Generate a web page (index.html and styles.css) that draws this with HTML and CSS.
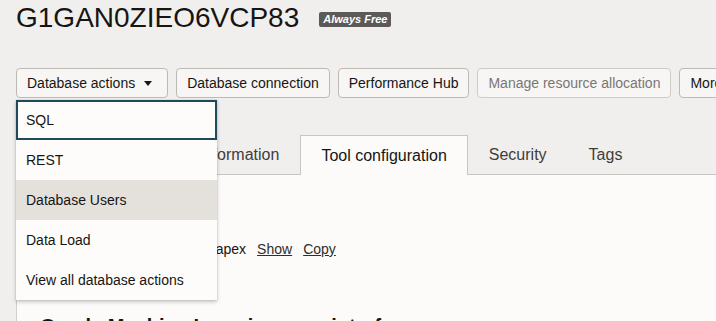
FILE: index.html
```html
<!DOCTYPE html>
<html lang="en">
<head>
<meta charset="utf-8">
<title>G1GAN0ZIEO6VCP83</title>
<link rel="stylesheet" href="styles.css">
</head>
<body>
<div class="page">
  <header class="title-row">
    <h1 class="title">G1GAN0ZIEO6VCP83</h1>
    <span class="badge">Always Free</span>
  </header>

  <div class="actions">
    <div class="menu-wrap">
      <button class="btn btn-menu">Database actions<span class="caret"></span></button>
      <ul class="menu">
        <li class="menu-item is-focused">SQL</li>
        <li class="menu-item">REST</li>
        <li class="menu-item is-hover">Database Users</li>
        <li class="menu-item">Data Load</li>
        <li class="menu-item">View all database actions</li>
      </ul>
    </div>
    <button class="btn">Database connection</button>
    <button class="btn">Performance Hub</button>
    <button class="btn is-disabled">Manage resource allocation</button>
    <button class="btn">More actions</button>
  </div>

  <nav class="tabs">
    <span class="tab tab-first">Autonomous Database information</span>
    <span class="tab is-active">Tool configuration</span>
    <span class="tab">Security</span>
    <span class="tab">Tags</span>
  </nav>

  <section class="panel">
    <h3 class="section-title">Oracle APEX</h3>
    <div class="url-row">
      <span class="url">https://adb.oracle.com/ords/apex</span>
      <a class="link">Show</a>
      <a class="link">Copy</a>
    </div>
    <h3 class="section-title big">Oracle Machine Learning user interface</h3>
  </section>
</div>
</body>
</html>
```

FILE: styles.css
```css
* { box-sizing: border-box; }

html, body {
  margin: 0;
  height: 100%;
  overflow: hidden;
}

body {
  background: #f1efed;
  font-family: "Liberation Sans", Arial, sans-serif;
  color: #161513;
}

.page {
  padding-left: 16px;
  min-height: 100%;
}

.title-row {
  display: flex;
  align-items: center;
  padding-top: 2px;
  height: 34px;
}

.title {
  margin: 0;
  font-size: 28px;
  font-weight: normal;
  line-height: 32px;
  color: #161513;
}

.badge {
  margin-left: 20px;
  margin-top: 3px;
  background: #5b5a59;
  color: #ffffff;
  font-size: 11px;
  font-style: italic;
  font-weight: bold;
  line-height: 15px;
  padding: 0 4px;
  border-radius: 2px;
}

.actions {
  margin-top: 34px;
  display: flex;
  gap: 8px;
  white-space: nowrap;
}

.btn {
  height: 30px;
  padding: 0 10px;
  background: #f7f6f5;
  border: 1px solid #bdb9b5;
  border-radius: 4px;
  font-family: inherit;
  font-size: 14px;
  color: #161513;
  display: inline-flex;
  align-items: center;
  flex: none;
}

.btn.is-disabled {
  color: #7a7673;
  border-color: #cfccc8;
}

.btn-menu {
  padding-right: 15px;
}

.caret {
  margin-left: 9px;
  width: 0;
  height: 0;
  border-left: 4.5px solid transparent;
  border-right: 4.5px solid transparent;
  border-top: 5px solid #161513;
}

.menu-wrap {
  position: relative;
  flex: none;
}

.menu {
  position: absolute;
  top: 32px;
  left: 0;
  width: 201px;
  margin: 0;
  padding: 0;
  list-style: none;
  background: #fdfcfb;
  box-shadow: 0 2px 4px rgba(0, 0, 0, 0.22), 0 0 1px rgba(0, 0, 0, 0.25);
  z-index: 10;
}

.menu-item {
  height: 40px;
  display: flex;
  align-items: center;
  padding: 0 10px;
  font-size: 14px;
  color: #161513;
}

.menu-item.is-focused {
  border: 2px solid #1d4b5b;
  padding: 0 8px;
}

.menu-item.is-hover {
  background: #e4e1dd;
}

.tabs {
  margin-top: 37px;
  display: flex;
  border-bottom: 1px solid #c9c6c2;
  white-space: nowrap;
}

.tab {
  height: 39px;
  padding: 0 20px;
  display: flex;
  align-items: center;
  font-size: 16px;
  color: #403d3a;
  border: 1px solid transparent;
  border-bottom: none;
  margin-bottom: -1px;
}

.tab-first {
  padding-left: 16px;
}

.tab.is-active {
  background: #fcfbfa;
  border-color: #c9c6c2;
  color: #161513;
  height: 40px;
}

.panel {
  background: #fcfbfa;
  border-left: 1px solid #d2cfcb;
  padding: 20px 0 40px 23px;
  min-height: 200px;
}

.section-title {
  margin: 0;
  font-size: 18px;
  font-weight: bold;
  line-height: 24px;
}

.url-row {
  margin-top: 20px;
  margin-left: 3px;
  display: flex;
  gap: 11px;
  font-size: 14px;
  line-height: 20px;
  white-space: nowrap;
}

.link {
  color: #302d2a;
  text-decoration: underline;
}

.section-title.big {
  margin-top: 55px;
  font-size: 20px;
  font-weight: bold;
}
```
